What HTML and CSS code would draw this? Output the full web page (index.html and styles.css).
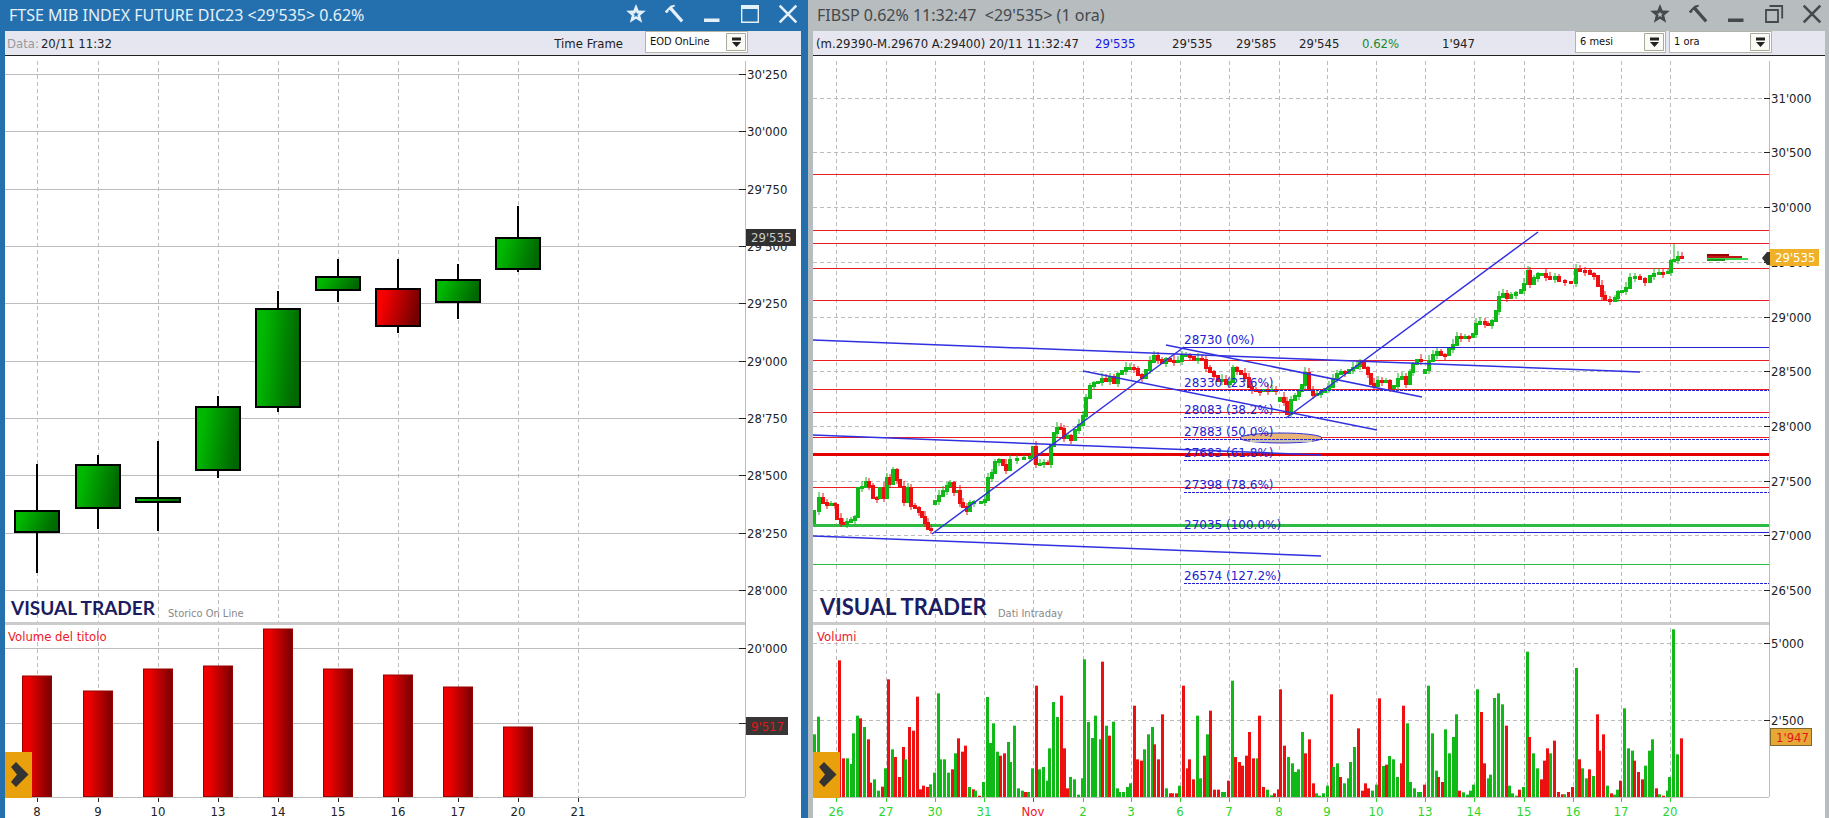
FILE: index.html
```html
<!DOCTYPE html>
<html lang="it">
<head>
<meta charset="utf-8">
<title>Visual Trader</title>
<link rel="stylesheet" href="styles.css">
</head>
<body>
<svg class="sprite" aria-hidden="true">
  <symbol id="i-star" viewBox="0 0 20 20"><path fill="currentColor" fill-rule="evenodd" d="M10 0l2.600 6.600 7.200.2-5.600 4.600 2 7.400L10 14.800l-6.200 4 2-7.400L.200 6.800l7.200-.2zM10 7.500L9.200 9.600l-2.200.1 1.700 1.400-.6 2.200L10 12.100l1.900 1.200-.6-2.200L13 9.700l-2.200-.1z"/></symbol>
  <symbol id="i-hammer" viewBox="0 0 20 20"><path fill="currentColor" d="M.8 7.500L6.500 1.800 10.500.8 11 2.200 8.300 3.600 9.700 5.300 19.300 16.200 17 18.500 7 7.300 5.600 5.800 4.500 6.600 4.600 7.800 2.600 9.300z"/></symbol>
  <symbol id="i-min" viewBox="0 0 20 20"><path fill="currentColor" d="M2 14.500h15.500v3.500H2z"/></symbol>
  <symbol id="i-max" viewBox="0 0 20 20"><path fill="none" stroke="currentColor" stroke-width="1.400" d="M1.700 2h16.600v16.300H1.700z"/><path fill="currentColor" d="M1 1h18v4H1z"/></symbol>
  <symbol id="i-restore" viewBox="0 0 20 20"><path fill="none" stroke="currentColor" stroke-width="1.800" d="M2 6h12v12H2zM5.500 2h12.700v12.500"/></symbol>
  <symbol id="i-close" viewBox="0 0 20 20"><path fill="none" stroke="currentColor" stroke-width="2.600" d="M1.700 1.700l16.600 16.600M18.300 1.700L1.700 18.300"/></symbol>
  <symbol id="i-drop" viewBox="0 0 20 18"><path fill="#fbfbf6" stroke="#a9a99c" d="M.5.500h19v17H.5z"/><path fill="#222" d="M6 4.500h9v3H6zM6 9h9l-4.500 5z"/></symbol>
  <symbol id="i-chevron" viewBox="0 0 27 46"><path fill="#333" d="M6 15l5-5 12.500 12.500L11 35l-5-5 6-7.500z"/></symbol>
</svg>

<main class="desk">
  <section class="win win-active">
    <header class="bar">
      <h1 class="title">FTSE MIB INDEX FUTURE DIC23 &lt;29'535&gt; 0.62%</h1>
      <div class="tools">
        <button class="tool" aria-label="Preferiti"><svg><use href="#i-star"/></svg></button>
        <button class="tool" aria-label="Strumenti"><svg><use href="#i-hammer"/></svg></button>
        <button class="tool" aria-label="Riduci"><svg><use href="#i-min"/></svg></button>
        <button class="tool" aria-label="Ingrandisci"><svg><use href="#i-max"/></svg></button>
        <button class="tool" aria-label="Chiudi"><svg><use href="#i-close"/></svg></button>
      </div>
    </header>
    <div class="info">
      <p class="stamp"><span class="muted">Data:</span>20/11 11:32</p>
      <label class="frame" for="timeframe">Time Frame</label>
      <span class="pick pick-frame"><select id="timeframe"><option>EOD OnLine</option></select><svg><use href="#i-drop"/></svg></span>
    </div>
    <div class="plot">
      <svg class="chart" id="daily" viewBox="5 56 796 762" role="img" aria-label="Grafico giornaliero"></svg>
      <button class="expand" aria-label="Apri pannello"><svg><use href="#i-chevron"/></svg></button>
    </div>
  </section>

  <section class="win win-idle">
    <header class="bar">
      <h2 class="title">FIBSP 0.62% 11:32:47 &nbsp;&lt;29'535&gt; (1 ora)</h2>
      <div class="tools">
        <button class="tool" aria-label="Preferiti"><svg><use href="#i-star"/></svg></button>
        <button class="tool" aria-label="Strumenti"><svg><use href="#i-hammer"/></svg></button>
        <button class="tool" aria-label="Riduci"><svg><use href="#i-min"/></svg></button>
        <button class="tool" aria-label="Ripristina"><svg><use href="#i-restore"/></svg></button>
        <button class="tool" aria-label="Chiudi"><svg><use href="#i-close"/></svg></button>
      </div>
    </header>
    <div class="info">
      <p class="quotes">
        <span class="session">(m.29390-M.29670 A:29400) 20/11 11:32:47</span>
        <span class="last">29'535</span>
        <span class="bid">29'535</span>
        <span class="ask">29'585</span>
        <span class="mid">29'545</span>
        <span class="change">0.62%</span>
        <span class="size">1'947</span>
      </p>
      <span class="pick pick-range"><select aria-label="Periodo"><option>6 mesi</option></select><svg><use href="#i-drop"/></svg></span>
      <span class="pick pick-step"><select aria-label="Intervallo"><option>1 ora</option></select><svg><use href="#i-drop"/></svg></span>
    </div>
    <div class="plot">
      <svg class="chart" id="intraday" viewBox="813 56 1012 762" role="img" aria-label="Grafico intraday"></svg>
      <button class="expand" aria-label="Apri pannello"><svg><use href="#i-chevron"/></svg></button>
    </div>
  </section>
</main>
<script src="charts.js"></script>
</body>
</html>
```

FILE: styles.css
```css
* { box-sizing: border-box; }

body {
  margin: 0;
  min-height: 100vh;
  background: #b5babc;
  color: #222;
  font-family: "DejaVu Sans Condensed", "Noto Sans", sans-serif;
  font-size: 13px;
}

h1, h2, p { margin: 0; }
.sprite { display: none; }

.desk {
  display: grid;
  grid-template-columns: 808fr 1021fr;
  min-height: 100vh;
}

.win {
  display: flex;
  flex-direction: column;
  min-width: 0;
}
.win-active {
  background: #2470ae;
  border: solid #2470ae;
  border-width: 0 7px 0 5px;
}
.win-idle {
  border: solid #b7bcbe;
  border-width: 0 4px 0 5px;
}

.bar {
  display: flex;
  align-items: center;
  justify-content: space-between;
  height: 31px;
  padding: 0 3px 2px 4px;
}
.win-active .bar { background: #2470ae; color: #e4f0fa; }
.win-idle .bar { background: #b7bcbe; color: #44494c; }
.title {
  font-family: "Noto Sans", "Open Sans", sans-serif;
  font-size: 16px;
  font-weight: 400;
  line-height: 24px;
  white-space: nowrap;
}
.tools {
  display: flex;
  gap: 18px;
  margin-bottom: 2px;
}
.tool {
  width: 20px;
  height: 20px;
  padding: 0;
  border: 0;
  background: none;
  color: inherit;
}
.tool svg { display: block; width: 20px; height: 20px; }

.info {
  display: flex;
  align-items: center;
  height: 25px;
  padding-left: 2px;
  background: #e6e6f0;
  border-bottom: 1px solid #222;
  white-space: nowrap;
}
.win-idle .info { padding-left: 3px; }
.muted { margin-right: 2px; color: #999; }
.stamp { flex: 1; }
.frame { margin-right: 22px; }
.quotes { display: flex; flex: 1; }
.session { flex: 0 0 279px; }
.last { flex: 0 0 77px; color: #1818e8; }
.bid { flex: 0 0 64px; }
.ask { flex: 0 0 63px; }
.mid { flex: 0 0 63px; }
.change { flex: 0 0 80px; color: #168a2c; }

.pick {
  position: relative;
  height: 22px;
  margin-bottom: 2px;
}
.pick-frame { width: 103px; margin-right: 53px; }
.pick-range { width: 91px; margin-right: 3px; }
.pick-step { width: 103px; margin-right: 53px; }
.pick select {
  display: block;
  width: 100%;
  height: 22px;
  padding: 0 24px 2px 4px;
  border: 1px solid #b4b4a8;
  border-radius: 0;
  background: #fff;
  color: #111;
  appearance: none;
  font-family: "DejaVu Sans Condensed", sans-serif;
  font-size: 11px;
}
.pick svg {
  position: absolute;
  top: 2px;
  right: 2px;
  width: 20px;
  height: 18px;
  pointer-events: none;
}

.plot {
  position: relative;
  flex: 1;
  background: #fff;
}
.chart { display: block; width: 100%; height: auto; }
.expand {
  position: absolute;
  left: 0;
  bottom: 20px;
  width: 27px;
  height: 46px;
  padding: 0;
  border: 0;
  background: #e8a00c;
}
.expand svg { display: block; width: 27px; height: 46px; }

.chart text { fill: #222; font-size: 13px; }
.chart .brand { fill: #1c1c60; font-family: Lato, sans-serif; font-weight: 700; }
.chart .brand-s { font-size: 19px; }
.chart .brand-l { font-size: 22px; }
.chart .source { fill: #888; font-size: 11px; }
.chart .panel-name { fill: #f01828; }
.chart .day { fill: #2bd62b; }
.chart .month { fill: #f01828; }
.chart .fib-name { fill: #2222d0; font-family: "DejaVu Sans", sans-serif; font-size: 12px; }
.chart .tag-light { fill: #ccc; }
.chart .tag-white { fill: #fff; }
.chart .tag-red { fill: #e01818; }

.grid { stroke: #bdbdbd; stroke-width: 1; shape-rendering: crispEdges; }
.dash { stroke: #bcbcbc; stroke-width: 1; stroke-dasharray: 4 3; shape-rendering: crispEdges; }
.tick { stroke: #222; stroke-width: 1; shape-rendering: crispEdges; }
.tick-green { stroke: #2bd62b; stroke-width: 1; shape-rendering: crispEdges; }
.tick-red { stroke: #f01828; stroke-width: 1; shape-rendering: crispEdges; }
.split { fill: #cbcbcb; }
.level { stroke: #ec1c24; stroke-width: 1; shape-rendering: crispEdges; }
.level-bold { stroke: #e40000; stroke-width: 3; shape-rendering: crispEdges; }
.support { stroke: #2dbb44; stroke-width: 1; shape-rendering: crispEdges; }
.support-bold { stroke: #2dbb44; stroke-width: 3; shape-rendering: crispEdges; }
.fib { stroke: #2222d0; stroke-width: 1; shape-rendering: crispEdges; }
.fib-dash { stroke: #2222d0; stroke-width: 1; stroke-dasharray: 3 1; shape-rendering: crispEdges; }
.trend { stroke: #3030e0; stroke-width: 1.5; }
.wick { stroke: #000; stroke-width: 2; }
.body { stroke: #000; stroke-width: 2; }
.up { fill: #10b818; }
.down { fill: #ee1010; }
.wick-up { stroke: #10b818; }
.wick-down { stroke: #ee1010; }
```

FILE: charts.js
```js
const NS = 'http://www.w3.org/2000/svg';

function add(parent, tag, attrs, text) {
  const node = document.createElementNS(NS, tag);
  for (const key in attrs) node.setAttribute(key, attrs[key]);
  if (text !== undefined) node.textContent = text;
  parent.appendChild(node);
  return node;
}
const line = (p, cls, x1, y1, x2, y2) => add(p, 'line', { class: cls, x1, y1, x2, y2 });
const rect = (p, x, y, width, height, attrs) => add(p, 'rect', { x, y, width, height, ...attrs });
const label = (p, cls, x, y, text, anchor = 'start') =>
  add(p, 'text', { class: cls, x, y, 'text-anchor': anchor }, text);

function gradient(defs, id, from, to, diagonal) {
  const g = add(defs, 'linearGradient', { id, x1: 0, y1: 0, x2: 1, y2: diagonal ? 0.2 : 0 });
  add(g, 'stop', { offset: 0.2, 'stop-color': from });
  add(g, 'stop', { offset: 1, 'stop-color': to });
}

const BASE = 797;

function drawDaily() {
  const svg = document.getElementById('daily');
  const defs = add(svg, 'defs', {});
  gradient(defs, 'green', '#00b800', '#006800', true);
  gradient(defs, 'red', '#f80000', '#780000', true);
  gradient(defs, 'volume', '#ee0000', '#780000', false);

  const right = 745;
  // day, centre x, high, body top, body bottom, low, colour, volume top
  const days = [
    ['8', 37, 464, 511, 532, 573, 'green', 676],
    ['9', 98, 455, 465, 508, 529, 'green', 691],
    ['10', 158, 441, 498, 502, 531, 'green', 669],
    ['13', 218, 396, 407, 470, 478, 'green', 666],
    ['14', 278, 291, 309, 407, 412, 'green', 629],
    ['15', 338, 259, 277, 290, 302, 'green', 669],
    ['16', 398, 259, 289, 326, 333, 'red', 675],
    ['17', 458, 264, 280, 302, 319, 'green', 687],
    ['20', 518, 206, 238, 269, 272, 'green', 727],
    ['21', 578],
  ];
  const prices = [["30'250", 74], ["30'000", 131], ["29'750", 189], ["29'500", 246], ["29'250", 303],
    ["29'000", 361], ["28'750", 418], ["28'500", 475], ["28'250", 533], ["28'000", 590], ["20'000", 648]];

  days.forEach(([, x]) => line(svg, 'dash', x + 0.5, 61, x + 0.5, BASE));
  prices.forEach(([, y]) => line(svg, 'grid', 5, y + 0.5, right, y + 0.5));
  line(svg, 'grid', 5, 723.5, right, 723.5);
  line(svg, 'grid', 5, BASE + 0.5, right, BASE + 0.5);
  line(svg, 'grid', right + 0.5, 61, right + 0.5, BASE);
  rect(svg, 5, 622, 740, 3, { class: 'split' });

  days.forEach(([name, x, high, top, bottom, low, colour, vol]) => {
    line(svg, 'tick', x + 0.5, 798, x + 0.5, 802);
    label(svg, '', x, 816, name, 'middle');
    if (high === undefined) return;
    line(svg, 'wick', x, high, x, low);
    rect(svg, x - 22, top, 44, bottom - top, { class: 'body', fill: `url(#${colour})` });
    rect(svg, x - 14.5, vol, 29, BASE - vol - 0.5, { fill: 'url(#volume)', stroke: '#900' });
  });
  prices.forEach(([text, y]) => {
    line(svg, 'tick', 739, y + 0.5, 746, y + 0.5);
    label(svg, '', 747, y + 5, text);
  });
  line(svg, 'tick', 739, 723.5, 746, 723.5);

  rect(svg, 746, 229, 50, 17, { fill: '#303030' });
  label(svg, 'tag-light', 751, 242, "29'535");
  rect(svg, 746, 717, 42, 18, { fill: '#3a3535' });
  label(svg, 'tag-red', 751, 731, "9'517");

  label(svg, 'brand brand-s', 11, 615, 'VISUAL TRADER');
  label(svg, 'source', 168, 617, 'Storico On Line');
  label(svg, 'panel-name', 8, 641, 'Volume del titolo');
}

// Closing levels of the hourly candles as x,y pairs; a new row starts a new run.
const closes = [
  `814,511 819,498 823,503 827,505 831,504 835,505 837,519 841,523 843,524 847,522 851,520 855,517 858,488
   862,487 866,482 869,486 873,498 877,498 880,488 884,498 887,478 890,484 893,470 897,480 900,487 904,502
   908,488 911,506 915,508 919,512 922,517 925,523 928,529 931,529`,
  `935,501 939,496 943,491 947,486 950,483 954,492 958,491 960,503 963,507 967,511 970,503 974,502 981,502
   985,500 988,478 992,473 995,462 999,460 1003,465 1006,470 1010,460 1017,459 1024,458 1030,457 1033,447
   1036,464 1040,464 1044,463 1048,464 1051,446 1054,433 1057,428 1061,429 1064,438 1068,436 1071,440
   1075,430 1079,425 1083,416 1086,398 1090,386 1094,383 1098,382 1102,379 1106,381 1110,377 1114,383
   1118,374 1122,371 1126,368 1130,368 1134,369 1138,375 1142,378 1146,370 1150,362 1154,356 1158,360
   1162,363 1166,359 1170,361 1174,361 1178,361 1182,355 1186,355 1190,357 1194,360 1198,359 1202,360
   1206,368 1210,372 1214,376 1218,381 1222,380 1226,384 1230,382 1233,368 1237,371 1241,374 1245,378
   1249,387 1252,390 1256,391 1260,391 1264,390 1268,391 1272,390 1276,391`,
  `1280,398 1284,402 1287,414 1291,400 1295,396 1299,391 1302,385 1305,373 1309,390 1313,395 1317,394
   1321,392 1325,389 1329,387 1333,379 1337,374 1341,372 1345,373 1349,370 1353,368 1357,366 1360,363
   1364,368 1368,374 1371,384 1374,386 1378,381 1382,381 1386,381 1390,388 1394,386 1398,379 1402,377
   1406,384 1410,372 1413,364 1417,360 1421,360`,
  `1425,370 1429,361 1433,355 1437,352 1441,355 1445,355 1449,349 1453,345 1457,337 1461,338 1465,337
   1469,337 1473,334 1476,324 1480,322 1485,324 1488,325 1492,321 1496,311 1499,297 1503,294 1507,298
   1511,295 1516,293 1521,290 1524,284 1528,271 1530,284 1534,278 1538,274 1542,274 1546,277 1550,279
   1555,277 1559,281 1565,282 1571,283 1576,270 1580,271 1585,271 1590,274 1594,276 1598,286 1602,296
   1605,300 1610,301 1615,298 1618,292 1622,291 1626,288 1630,278 1635,277 1640,279 1645,282 1650,276
   1654,274 1659,273 1663,273 1668,272 1671,261 1674,260 1678,257 1682,258`,
];

// Each block: left origin, then x:top+colour, in thirds of a pixel below the y=560 line.
const volumes = [
  [800, `43:523g 55:470g 119:301r 130:595r 141:595g 153:612g 160:520g 171:467g 182:475r 194:501g 205:538r
   211:668r 224:658g 235:692g 246:680r 257:625g 265:358r 276:568g 287:591r 299:651r 310:561r 317:598g
   329:501r 340:512r 351:410r 362:688r 370:677r 381:681r 392:673g 404:638g 415:400g 422:598g 433:598g
   445:638g 456:628r 467:580g 475:535r 486:575r 497:557r 509:681g 520:688r 526:692g 539:707r 550:666g
   561:411g 572:549g 580:490g 591:575g 602:587r 614:580r 625:546g 632:606g 644:497g 655:685g 666:692g
   677:696r 685:696g 696:625g 708:377r 718:628g 730:621g 741:662g 749:565g 760:426g 771:471g 783:407r
   794:565r 801:685r 812:651g 824:658g 835:704g 847:655g 853:298g 865:486g 876:534g 887:467g 900:538g
   906:305r 918:497g 929:527r 940:485g 951:685g 959:696g 970:696g 981:681g 992:670g 1004:437r 1012:598r
   1023:602r 1034:568g 1045:523g 1056:501g 1063:553r 1074:598r`],
  [1140, `67:463r 78:685g 90:700r 97:700r 108:700r 119:677g 130:377r 141:625r 149:598r 160:658r 171:467g
   182:655g 194:587r 201:523g 212:452r 224:689r 235:689r 246:696g 254:696g 265:662r 276:362g 287:591r
   299:606r 306:617r 318:587r 329:516r 340:595r 351:595g 359:467r 370:681r 381:689g 393:706g 404:700r
   415:688r 422:388r 434:557r 445:591g 456:610g 467:636g 475:628g 486:516g 497:580r 509:538r 520:670r
   528:700g 539:707g 550:700g 561:677g 573:403r 580:621g 591:610g 602:651r 614:670g 625:655g 632:606g
   644:561g 655:505r 666:692r 677:670r 685:685r 696:692g 708:674g 719:415r 730:618g 738:614r 749:588g
   760:598g 771:651g 783:610r 790:437r 801:490g 812:666g 824:685g 835:696g 842:696g 854:674r 865:377g
   877:520g 888:632g 895:651r 906:666r 917:508g 929:580g 940:531g 948:463g 959:692r 970:697g 981:704g
   992:692g 1000:674g 1011:388g`],
  [1480, `3:456r 14:610r 25:655g 32:644g 44:414g 55:400g 67:433g 78:497r 89:677g 97:700g 108:707g 119:689r
   130:681g 141:275g 149:531r 160:580g 171:625g 183:658r 194:602r 201:565r 212:580g 224:542r 235:696r
   247:703r 254:703g 265:696r 277:681r 288:324g 299:598r 306:625g 318:655g 329:628r 340:648g 351:463r
   358:572r 370:523r 381:677g 393:700r 404:704g 411:689g 422:662r 434:445g 445:565g 456:572g 463:602r
   475:636r 486:658r 497:617g 509:572g 516:538g 528:685r 539:703g 550:707r 562:692g 569:651g 580:208g
   591:583g 603:535r`],
];

function drawIntraday() {
  const svg = document.getElementById('intraday');
  const left = 813;
  const right = 1769;
  const days = [['26', 836], ['27', 886], ['30', 935], ['31', 984], ['Nov', 1033], ['2', 1083], ['3', 1131],
    ['6', 1180], ['7', 1229], ['8', 1279], ['9', 1327], ['10', 1376], ['13', 1425], ['14', 1474],
    ['15', 1524], ['16', 1573], ['17', 1621], ['20', 1670]];
  const prices = [["31'000", 98], ["30'500", 152], ["30'000", 207], ["29'500", 262], ["29'000", 317],
    ["28'500", 371], ["28'000", 426], ["27'500", 481], ["27'000", 535], ["26'500", 590],
    ["5'000", 643], ["2'500", 720]];

  days.forEach(([, x]) => line(svg, 'dash', x + 0.5, 61, x + 0.5, BASE));
  prices.forEach(([, y]) => line(svg, 'dash', left, y + 0.5, right, y + 0.5));
  rect(svg, left, 622, right - left, 3, { class: 'split' });
  line(svg, 'grid', left, BASE + 0.5, right, BASE + 0.5);
  line(svg, 'grid', right + 0.5, 61, right + 0.5, BASE);

  [174, 230, 243, 268, 300, 360, 389, 412, 437, 487].forEach(y =>
    line(svg, 'level', left, y + 0.5, right, y + 0.5));
  line(svg, 'level-bold', left, 454.5, right, 454.5);
  line(svg, 'support-bold', left, 525.5, right, 525.5);
  line(svg, 'support', left, 564.5, right, 564.5);

  closes.forEach((run, r) => {
    const points = run.trim().split(/\s+/).map(p => p.split(',').map(Number));
    points.forEach(([x, y], i) => {
      const open = i ? points[i - 1][1] : y + (r ? 3 : 12);
      const rising = y < open || (y === open && i % 2 === 0);
      const top = Math.min(y, open) - 1;
      const height = Math.max(3, Math.abs(y - open) + 2);
      line(svg, rising ? 'wick-up' : 'wick-down', x, top - (i * 5 % 6), x, top + height + (i * 3 % 6));
      rect(svg, x - 2, top, 4, height, { class: rising ? 'up' : 'down' });
    });
  });
  line(svg, 'wick-up', 1674, 244, 1674, 260);

  add(svg, 'ellipse', { cx: 1281, cy: 438, rx: 41, ry: 5, fill: '#e8b478', stroke: '#3030d8' });
  rect(svg, 1250, 440, 62, 2, { fill: '#c8c8b8' });

  const fibs = [["28730 (0%)", 347, 344, 1184], ["28330 (23.6%)", 390, 387, 1184],
    ["28083 (38.2%)", 417, 414, 1184], ["27883 (50.0%)", 439, 436, 1184], ["27683 (61.8%)", 460, 457, 1184],
    ["27398 (78.6%)", 492, 489, 1184], ["27035 (100.0%)", 532, 529, 935], ["26574 (127.2%)", 583, 580, 1184]];
  fibs.forEach(([text, y, base, x]) => {
    const solid = y === 347 || y === 532;
    line(svg, solid ? 'fib' : 'fib-dash', x, y + 0.5, right, y + 0.5);
    label(svg, 'fib-name', 1184, base, text);
  });

  [[813, 340, 1640, 372], [1166, 345, 1422, 397], [1083, 371, 1377, 430], [813, 435, 1321, 455],
    [932, 534, 1184, 347], [1286, 418, 1538, 232], [813, 536, 1321, 556]].forEach(t => line(svg, 'trend', ...t));

  volumes.forEach(([origin, bars]) => bars.trim().split(/\s+/).forEach(bar => {
    const [x, rest] = bar.split(':');
    const height = (711 - parseInt(rest, 10)) / 3;
    rect(svg, Math.round(origin + x / 3 - 1.5), BASE - height, 3, height,
      { class: rest.endsWith('g') ? 'up' : 'down' });
  }));

  days.forEach(([name, x]) => {
    const month = name === 'Nov';
    line(svg, month ? 'tick-red' : 'tick-green', x + 0.5, 798, x + 0.5, 802);
    label(svg, month ? 'month' : 'day', x, 816, name, 'middle');
  });
  prices.forEach(([text, y]) => {
    line(svg, 'tick', 1764, y + 0.5, 1770, y + 0.5);
    label(svg, '', 1771, y + 5, text);
  });

  rect(svg, 1707, 254, 22, 2, { fill: '#a00000' });
  rect(svg, 1707, 256, 35, 2, { fill: '#c01818' });
  rect(svg, 1707, 258, 41, 2, { fill: '#38d848' });
  rect(svg, 1707, 259, 18, 2, { fill: '#189820' });
  add(svg, 'path', { d: 'M1762 258l5-6h3v13h-3z', fill: '#333' });
  rect(svg, 1770, 249, 49, 17, { fill: '#f0b028' });
  label(svg, 'tag-white', 1775, 262, "29'535");
  rect(svg, 1770.5, 728.5, 41, 17, { fill: '#e8a838', stroke: '#7a6a30' });
  label(svg, 'tag-red', 1776, 742, "1'947");

  label(svg, 'brand brand-l', 820, 615, 'VISUAL TRADER');
  label(svg, 'source', 998, 617, 'Dati Intraday');
  label(svg, 'panel-name', 817, 641, 'Volumi');
}

drawDaily();
drawIntraday();
```
